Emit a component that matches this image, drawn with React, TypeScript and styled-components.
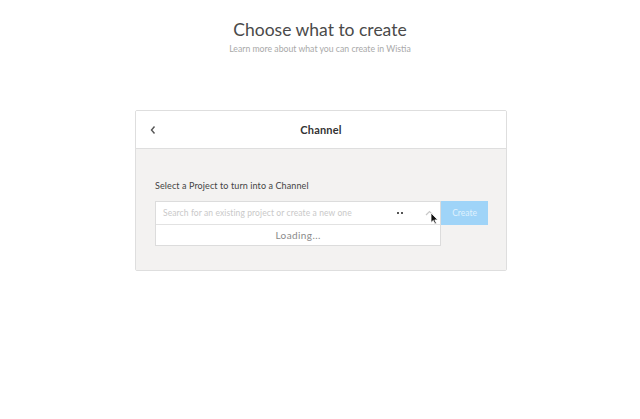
import React from 'react'
import styled, { createGlobalStyle } from 'styled-components'

const Global = createGlobalStyle`
  html, body {
    margin: 0;
    padding: 0;
    background: #ffffff;
    font-family: Lato, 'Liberation Sans', sans-serif;
  }
`

const App: React.FC = () => (
  <>
    <Global />
    <Page>
      <Heading>
        <h1>Choose what to create</h1>
        <p>Learn more about what you can create in Wistia</p>
      </Heading>
      <Card>
        <CardHeader>
          <BackButton>
            <svg width="8" height="10" viewBox="0 0 8 10">
              <path d="M5.5 1.5 L2.5 5 L5.5 8.5" fill="none" stroke="#555" strokeWidth="1.4" />
            </svg>
          </BackButton>
          <span className="title">Channel</span>
        </CardHeader>
        <CardBody>
          <Label>Select a Project to turn into a Channel</Label>
          <Picker>
            <Select>
              <SearchRow>
                <span className="placeholder">Search for an existing project or create a new one</span>
                <Dots>
                  <i />
                  <i />
                </Dots>
                <Chevron>
                  <svg width="9" height="6" viewBox="0 0 9 6">
                    <path d="M1 5 L4.5 1.5 L8 5" fill="none" stroke="#c8c8c8" strokeWidth="1.2" />
                  </svg>
                </Chevron>
                <Cursor>
                  <svg width="9" height="13" viewBox="0 0 9 13">
                    <path d="M1 1 L1 10.5 L3.3 8.4 L5 12 L6.4 11.3 L4.8 7.9 L7.8 7.9 Z" fill="#111" stroke="#fff" strokeWidth="0.8" />
                  </svg>
                </Cursor>
              </SearchRow>
              <Loading>Loading...</Loading>
            </Select>
            <CreateButton disabled>Create</CreateButton>
          </Picker>
        </CardBody>
      </Card>
    </Page>
  </>
)

const Page = styled.div`
  width: 640px;
  height: 419px;
  display: flex;
  flex-direction: column;
  align-items: center;
  padding-top: 19px;
  box-sizing: border-box;
`

const Heading = styled.div`
  text-align: center;
  margin-bottom: 55px;

  h1 {
    margin: 0;
    font-size: 17.5px;
    font-weight: 400;
    line-height: 22px;
    color: #4a4a4a;
    letter-spacing: 0;
  }

  p {
    margin: 2px 0 0;
    font-size: 8.7px;
    line-height: 12px;
    color: #a9a9a9;
  }
`

const Card = styled.div`
  width: 372px;
  margin-left: 2px;
  border: 1px solid #dedede;
  border-radius: 2px;
  box-sizing: border-box;
  overflow: hidden;
`

const CardHeader = styled.div`
  position: relative;
  height: 38px;
  display: flex;
  align-items: center;
  justify-content: center;
  background: #ffffff;
  border-bottom: 1px solid #dedede;
  box-sizing: border-box;

  .title {
    font-size: 11px;
    font-weight: 700;
    color: #333;
    letter-spacing: 0.2px;
  }
`

const BackButton = styled.div`
  position: absolute;
  left: 13px;
  top: 14px;
  display: flex;
`

const CardBody = styled.div`
  background: #f3f2f1;
  height: 121px;
  padding: 31px 18px 0 19px;
  box-sizing: border-box;
`

const Label = styled.div`
  font-size: 9px;
  color: #444;
  line-height: 12px;
  margin-bottom: 9px;
  letter-spacing: 0.1px;
`

const Picker = styled.div`
  display: flex;
  align-items: flex-start;
`

const Select = styled.div`
  width: 287px;
  background: #ffffff;
  border: 1px solid #dcdcdc;
  box-sizing: border-box;
`

const SearchRow = styled.div`
  position: relative;
  height: 22px;
  display: flex;
  align-items: center;
  padding-left: 7px;
  border-bottom: 1px solid #e2e2e2;

  .placeholder {
    font-size: 8.5px;
    color: #c9c9c9;
    flex: 1;
    white-space: nowrap;
    letter-spacing: 0.1px;
  }
`

const Dots = styled.div`
  display: flex;
  gap: 2px;
  margin-right: 22px;

  i {
    width: 2px;
    height: 1.5px;
    background: #555;
    display: block;
  }
`

const Chevron = styled.div`
  display: flex;
  margin-right: 6px;
`

const Cursor = styled.div`
  position: absolute;
  right: 1px;
  top: 10px;
  display: flex;
`

const Loading = styled.div`
  height: 20px;
  display: flex;
  align-items: center;
  justify-content: center;
  font-size: 10px;
  color: #8a8a8a;
  letter-spacing: 0.4px;
`

const CreateButton = styled.button`
  width: 47px;
  height: 24px;
  border: none;
  border-radius: 0;
  padding: 0;
  background: #9fd4f8;
  color: #dff1fd;
  font-family: inherit;
  font-size: 8.5px;
`

export default App
